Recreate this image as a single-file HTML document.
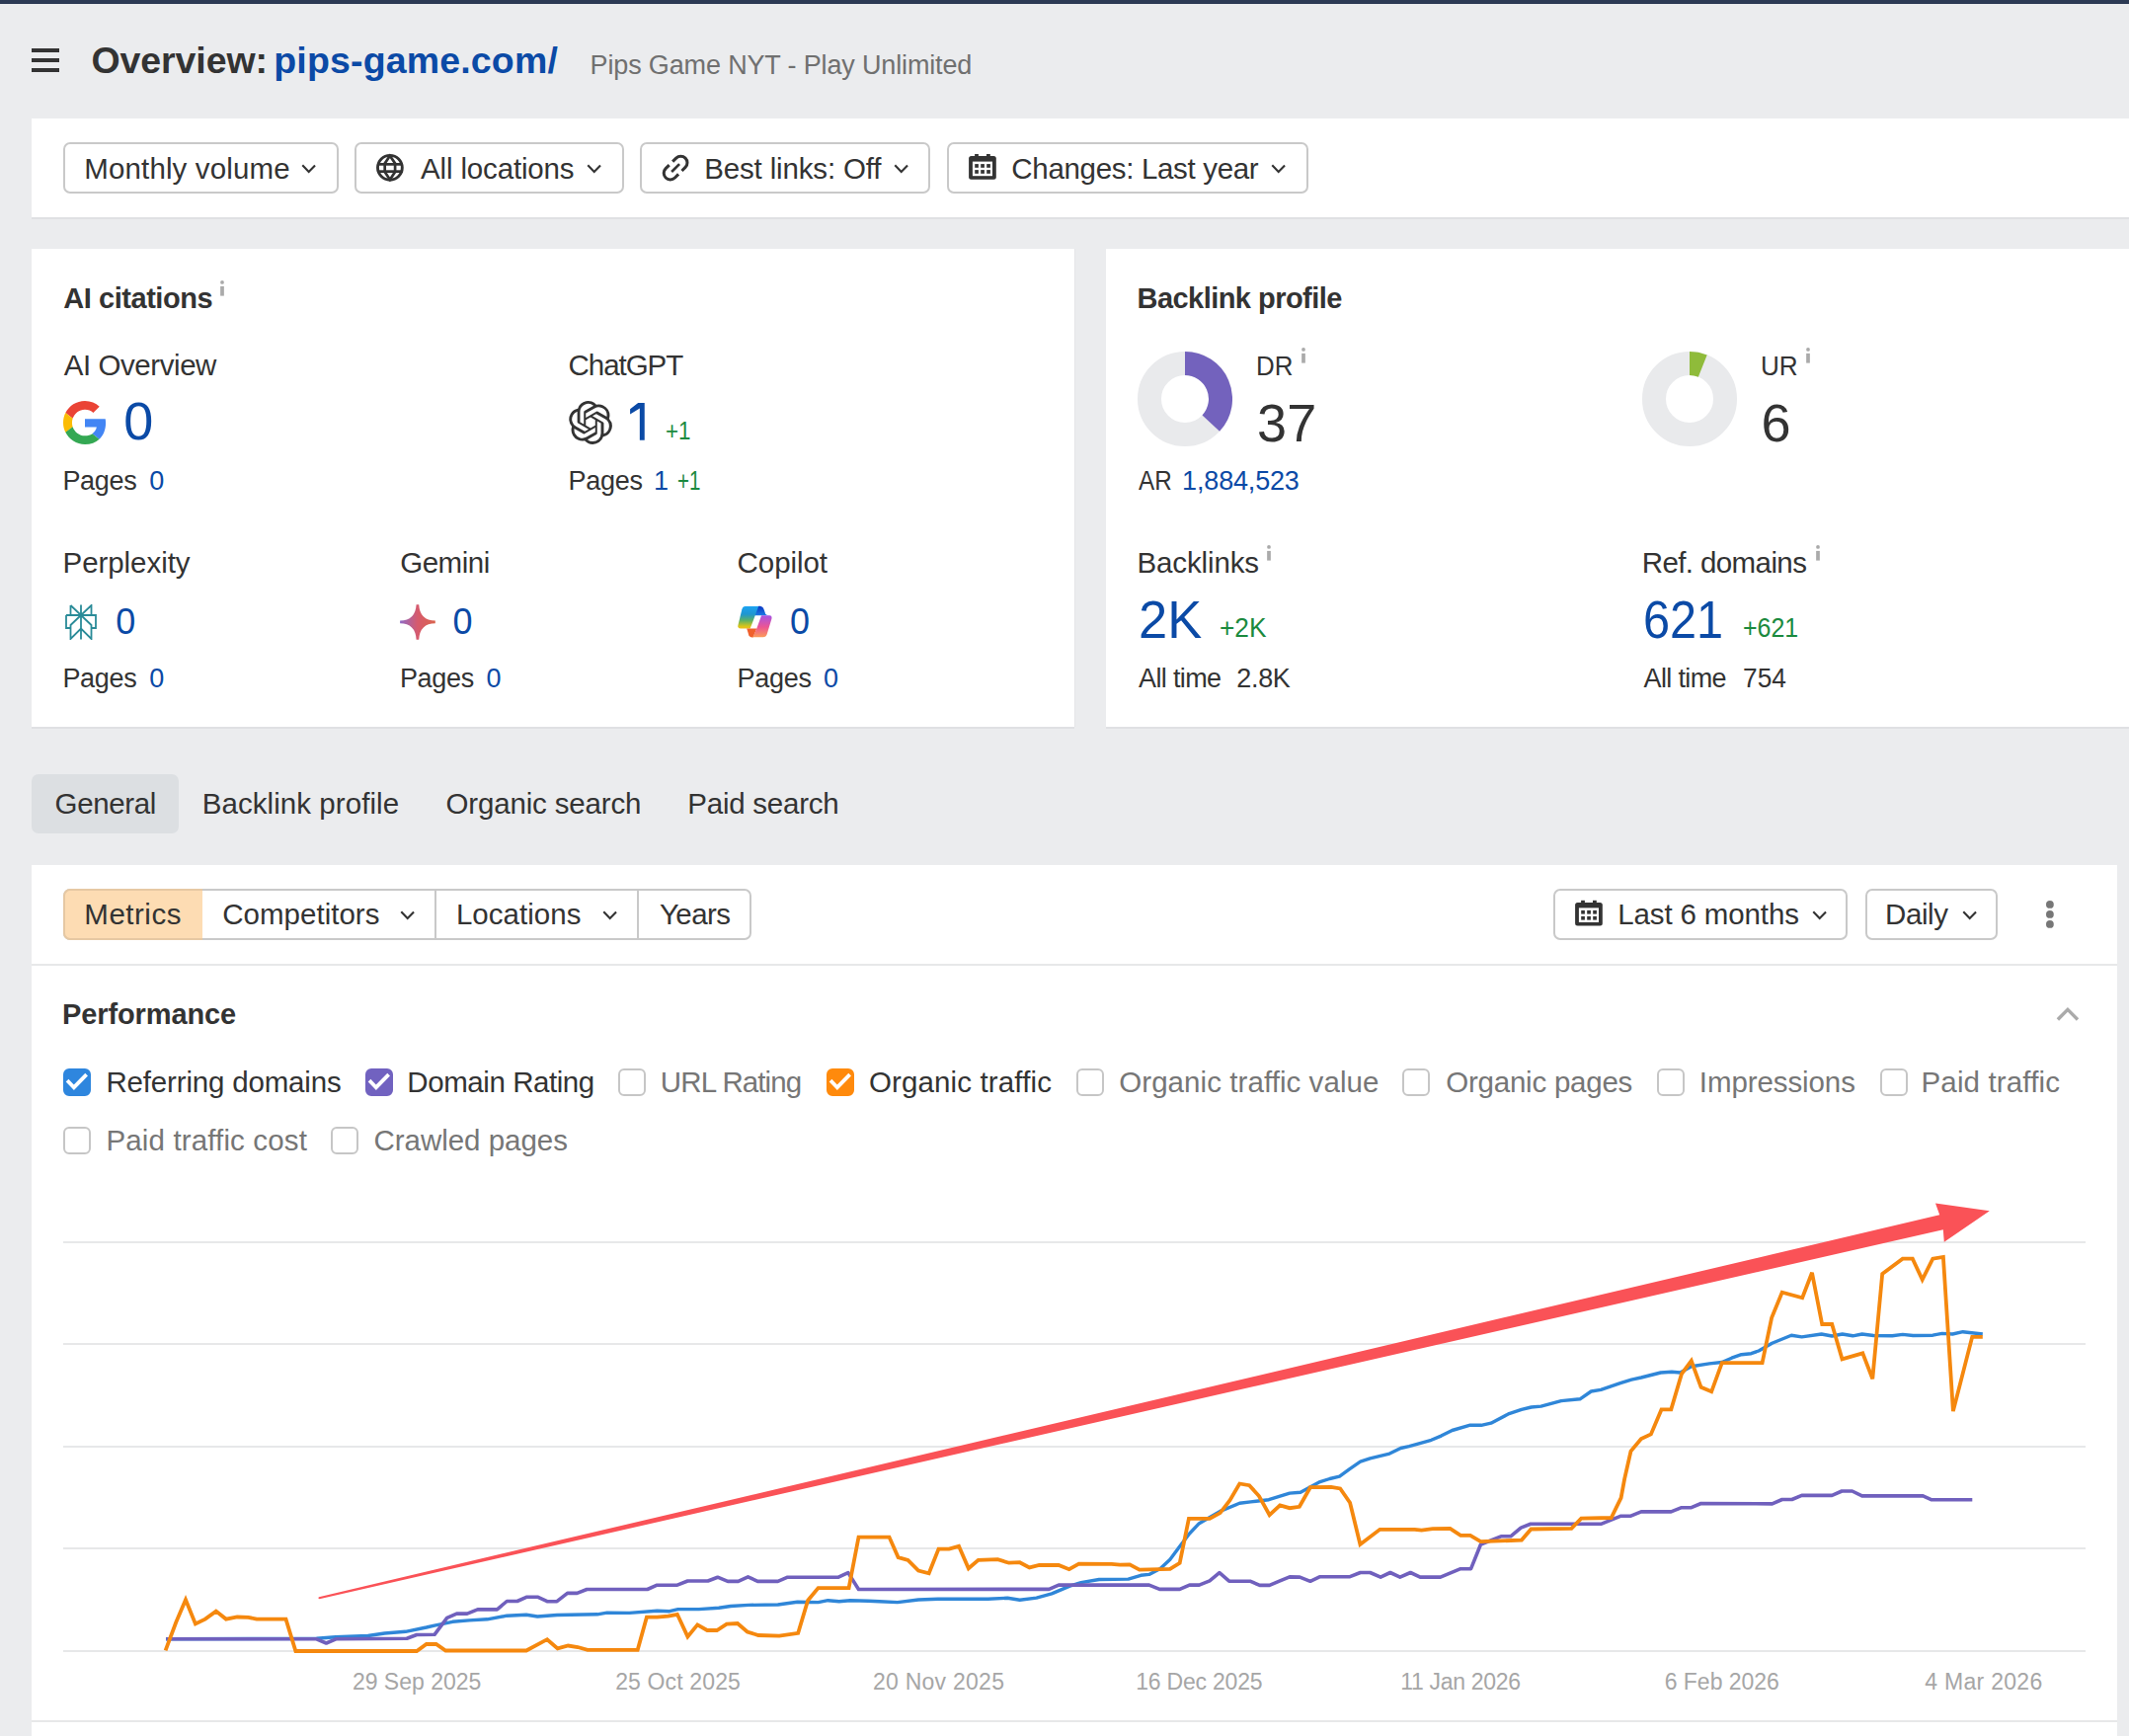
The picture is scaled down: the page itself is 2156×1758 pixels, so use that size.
<!DOCTYPE html>
<html><head><meta charset="utf-8"><title>Overview: pips-game.com/</title>
<style>
html,body{margin:0;padding:0;overflow:hidden}
body{width:2156px;height:1758px;overflow:hidden;background:#ebecee;position:relative;font-family:"Liberation Sans",sans-serif;color:#333}
.a{position:absolute}
.t{position:absolute;line-height:1;white-space:nowrap}
.card{position:absolute;background:#fff;box-shadow:0 2px 0 #dfe0e3,1px 0 0 #e4e5e7}
.btn{position:absolute;box-sizing:border-box;border:2px solid #c9c9c9;border-radius:7px;background:#fff}
.cb{position:absolute;box-sizing:border-box;width:28px;height:28px;border:2px solid #c6c6c6;border-radius:6px;background:#fff}
.hl{position:absolute;height:2px;background:#e7e8e9}
</style></head><body>
<div class="a" style="left:0;top:0;width:2156px;height:4px;background:#2c3a54"></div>
<div class="a" style="left:32px;top:49px;width:28px;height:4px;background:#333"></div>
<div class="a" style="left:32px;top:59px;width:28px;height:4px;background:#333"></div>
<div class="a" style="left:32px;top:69px;width:28px;height:4px;background:#333"></div>

<div class="card" style="left:32px;top:120px;width:2124px;height:100px"></div>
<div class="btn" style="left:64px;top:144px;width:279px;height:52px"></div>
<div class="btn" style="left:359px;top:144px;width:273px;height:52px"></div>
<div class="btn" style="left:648px;top:144px;width:294px;height:52px"></div>
<div class="btn" style="left:959px;top:144px;width:366px;height:52px"></div>
<svg class="a" style="left:304.3px;top:164.9px" width="18" height="13" viewBox="-3 -3 18 13"><polyline points="0,0 5.7,5.9 11.3,0.2" fill="none" stroke="#333333" stroke-width="2.1" stroke-linecap="square" stroke-linejoin="miter"/></svg><svg class="a" style="left:593.1px;top:164.9px" width="18" height="13" viewBox="-3 -3 18 13"><polyline points="0,0 5.7,5.9 11.3,0.2" fill="none" stroke="#333333" stroke-width="2.1" stroke-linecap="square" stroke-linejoin="miter"/></svg><svg class="a" style="left:904.1px;top:164.9px" width="18" height="13" viewBox="-3 -3 18 13"><polyline points="0,0 5.7,5.9 11.3,0.2" fill="none" stroke="#333333" stroke-width="2.1" stroke-linecap="square" stroke-linejoin="miter"/></svg><svg class="a" style="left:1285.7px;top:164.9px" width="18" height="13" viewBox="-3 -3 18 13"><polyline points="0,0 5.7,5.9 11.3,0.2" fill="none" stroke="#333333" stroke-width="2.1" stroke-linecap="square" stroke-linejoin="miter"/></svg>
<svg class="a" style="left:0;top:0;overflow:visible" width="1" height="1"><g fill="none" stroke="#333"><circle cx="394.9" cy="169.8" r="12.4" stroke-width="2.9"/><path d="M394.9,157.8 L389.7,165.5 L389.7,174 L394.9,181.9 L400.1,174 L400.1,165.5 Z" stroke-width="2.7" stroke-linejoin="miter"/></g><rect x="382" y="165" width="26" height="2.7" fill="#333"/><rect x="382" y="172.3" width="26" height="2.7" fill="#333"/></svg>
<svg class="a" style="left:0;top:0;overflow:visible" width="1" height="1"><g transform="translate(684.1,170.05) rotate(-45) scale(1.1)" fill="none" stroke="#333" stroke-linecap="butt"><path d="M2.2,-6 L6.8,-6 A6,6 0 0 1 6.8,6 L2.2,6" stroke-width="2.75"/><path d="M-2.2,-6 L-6.8,-6 A6,6 0 0 0 -6.8,6 L-2.2,6" stroke-width="2.75"/><path d="M-5.1,0 L5.1,0" stroke-width="2.4"/></g></svg>
<svg class="a" style="left:0;top:0;overflow:visible" width="1" height="1"><g fill="#333"><rect x="981.1" y="158.1" width="27.7" height="23.7" rx="2.5"/><rect x="987.1" y="156.0" width="3.8" height="3"/><rect x="999.0" y="156.0" width="3.8" height="3"/></g><rect x="984.9" y="163.6" width="20.1" height="14.6" fill="#fff"/><g fill="#333"><rect x="987.2" y="166.1" width="3.7" height="3.7"/><rect x="993.2" y="166.1" width="3.7" height="3.7"/><rect x="999.2" y="166.1" width="3.7" height="3.7"/><rect x="987.2" y="172.1" width="3.7" height="3.7"/><rect x="993.2" y="172.1" width="3.7" height="3.7"/><rect x="999.2" y="172.1" width="3.7" height="3.7"/></g></svg>

<div class="card" style="left:32px;top:252px;width:1056px;height:484px"></div>
<div class="card" style="left:1120px;top:252px;width:1036px;height:484px"></div>

<svg class="a" style="left:221.95px;top:283.2px" width="6" height="18" viewBox="221.95 283.2 6 18"><circle cx="224.95" cy="286.09999999999997" r="1.9" fill="#aaa"/><rect x="223.1" y="290.09999999999997" width="3.7" height="9.7" fill="#aaa"/></svg><svg class="a" style="left:1317.2px;top:350.9px" width="6" height="18" viewBox="1317.2 350.9 6 18"><circle cx="1320.2" cy="353.79999999999995" r="1.9" fill="#aaa"/><rect x="1318.3500000000001" y="357.79999999999995" width="3.7" height="9.7" fill="#aaa"/></svg><svg class="a" style="left:1828px;top:351.29999999999995px" width="6" height="18" viewBox="1828 351.29999999999995 6 18"><circle cx="1831" cy="354.19999999999993" r="1.9" fill="#aaa"/><rect x="1829.15" y="358.19999999999993" width="3.7" height="9.7" fill="#aaa"/></svg><svg class="a" style="left:1282px;top:551.3px" width="6" height="18" viewBox="1282 551.3 6 18"><circle cx="1285" cy="554.1999999999999" r="1.9" fill="#aaa"/><rect x="1283.15" y="558.1999999999999" width="3.7" height="9.7" fill="#aaa"/></svg><svg class="a" style="left:1837.9px;top:551.1999999999999px" width="6" height="18" viewBox="1837.9 551.1999999999999 6 18"><circle cx="1840.9" cy="554.0999999999999" r="1.9" fill="#aaa"/><rect x="1839.0500000000002" y="558.0999999999999" width="3.7" height="9.7" fill="#aaa"/></svg>
<svg class="a" style="left:0;top:0;overflow:visible" width="1" height="1"><path d="M646.2,408.1 L652.74,408.1 L652.74,445.85 L647.85,445.85 L647.85,413.6 L638.1,419.4 L638.1,414.2 Z" fill="#0b4aa6"/></svg>
<!-- Google G -->
<svg class="a" style="left:64px;top:406px" width="44" height="44" viewBox="0 0 48 48"><path fill="#EA4335" d="M24 9.5c3.54 0 6.71 1.22 9.21 3.6l6.85-6.85C35.9 2.38 30.47 0 24 0 14.62 0 6.51 5.38 2.56 13.22l7.98 6.19C12.43 13.72 17.74 9.5 24 9.5z"/><path fill="#4285F4" d="M46.98 24.55c0-1.57-.15-3.09-.38-4.55H24v9.02h12.94c-.58 2.96-2.26 5.48-4.78 7.18l7.73 6c4.51-4.18 7.09-10.36 7.09-17.65z"/><path fill="#FBBC05" d="M10.53 28.59c-.48-1.45-.76-2.99-.76-4.59s.27-3.14.76-4.59l-7.98-6.19C.92 16.46 0 20.12 0 24c0 3.88.92 7.54 2.56 10.78l7.97-6.19z"/><path fill="#34A853" d="M24 48c6.48 0 11.93-2.13 15.89-5.81l-7.73-6c-2.15 1.450-4.92 2.3-8.16 2.3-6.26 0-11.57-4.22-13.47-9.91l-7.98 6.19C6.51 42.62 14.62 48 24 48z"/></svg>
<!-- ChatGPT -->
<svg class="a" style="left:576px;top:406px" width="44" height="44" viewBox="0 0 24 24"><path fill="#333" d="M22.28 9.82a5.98 5.98 0 0 0-.52-4.91 6.05 6.05 0 0 0-6.51-2.9A6.07 6.07 0 0 0 4.98 4.18a5.98 5.98 0 0 0-4 2.9 6.05 6.05 0 0 0 .74 7.1 5.98 5.98 0 0 0 .51 4.91 6.05 6.05 0 0 0 6.52 2.9A5.98 5.98 0 0 0 13.26 24a6.06 6.06 0 0 0 5.77-4.21 5.99 5.99 0 0 0 4-2.9 6.06 6.06 0 0 0-.75-7.07zm-9.02 12.61a4.48 4.48 0 0 1-2.88-1.04l.14-.08 4.78-2.76a.8.8 0 0 0 .39-.68v-6.74l2.02 1.17a.07.07 0 0 1 .04.05v5.58a4.5 4.5 0 0 1-4.49 4.5zm-9.66-4.13a4.47 4.470 0 0 1-.53-3.01l.14.09 4.78 2.76a.77.77 0 0 0 .78 0l5.84-3.37v2.33a.08.08 0 0 1-.03.06L9.74 19.95a4.5 4.5 0 0 1-6.14-1.65zM2.34 7.9a4.49 4.49 0 0 1 2.37-1.97v5.68a.77.77 0 0 0 .39.68l5.81 3.35-2.02 1.17a.08.08 0 0 1-.07 0l-4.83-2.79A4.5 4.5 0 0 1 2.34 7.87zm16.6 3.86L13.1 8.36l2.02-1.16a.08.08 0 0 1 .07 0l4.83 2.79a4.49 4.49 0 0 1-.68 8.1v-5.68a.79.79 0 0 0-.41-.68zm2.01-3.02l-.14-.09-4.77-2.78a.78.78 0 0 0-.79 0L9.41 9.23V6.9a.07.07 0 0 1 .03-.06l4.83-2.79a4.5 4.5 0 0 1 6.68 4.66zM8.31 12.86L6.29 11.7a.08.08 0 0 1-.04-.06V6.08a4.5 4.5 0 0 1 7.37-3.45l-.14.08-4.78 2.76a.8.8 0 0 0-.39.68zm1.1-2.37l2.6-1.5 2.6 1.5v3l-2.6 1.5-2.6-1.5z"/></svg>
<!-- Perplexity -->
<svg class="a" style="left:66px;top:612px" width="32" height="36" viewBox="0 0 32 36" fill="none" stroke="#2a8b98" stroke-width="1.8" stroke-linejoin="miter"><path d="M16 0.5V35.5 M5.5 1 L16 11 L26.5 1 V11 M5.5 1 V11 M1 11 H31 V24 H26.5 M1 11 V24 H5.5 M16 11 L5.5 21 V35 L16 24.5 L26.5 35 V21 L16 11"/></svg>
<!-- Gemini -->
<svg class="a" style="left:0;top:0;overflow:visible" width="1" height="1"><defs><linearGradient id="gm" gradientUnits="userSpaceOnUse" x1="405" y1="0" x2="441" y2="0"><stop offset="0" stop-color="#8f6ac6"/><stop offset="0.5" stop-color="#d75a6c"/><stop offset="1" stop-color="#d9644e"/></linearGradient>
<linearGradient id="cp1" gradientUnits="userSpaceOnUse" x1="0" y1="614" x2="0" y2="637"><stop offset="0" stop-color="#1ca3f3"/><stop offset="0.35" stop-color="#1f96cf"/><stop offset="0.62" stop-color="#5bb166"/><stop offset="0.88" stop-color="#d9c518"/><stop offset="1" stop-color="#f3be22"/></linearGradient>
<linearGradient id="cp2" gradientUnits="userSpaceOnUse" x1="0" y1="623" x2="0" y2="645"><stop offset="0" stop-color="#a653e6"/><stop offset="0.55" stop-color="#ec5592"/><stop offset="1" stop-color="#fb9a5a"/></linearGradient>
<linearGradient id="cp3" gradientUnits="userSpaceOnUse" x1="0" y1="614" x2="0" y2="623"><stop offset="0" stop-color="#0b38c4"/><stop offset="1" stop-color="#1b78e2"/></linearGradient></defs>
<path fill="url(#gm)" d="M421.6,612.3 L424.2,612.3 Q425.2,628.6 440.8,628.6 L440.8,631.2 Q425.2,631.2 424.2,647.7 L421.6,647.7 Q420.6,631.2 405.1,631.2 L405.1,628.6 Q420.6,628.6 421.6,612.3 Z"/>
<path fill="url(#cp3)" d="M766.5,614.1 L769.5,613.8 Q773,614 774.2,618.8 L775.2,621.8 Q775.8,623.2 779,623.2 L764.3,623.2 Z"/>
<path fill="url(#cp1)" d="M754.7,614.1 L768.2,614.1 L759.7,636.6 L749.8,636.6 Q746.8,636.4 747.4,633.2 L751.3,617.3 Q752.3,614.1 754.7,614.1 Z"/>
<path fill="#f0602c" d="M756.2,636.6 L766.3,636.6 L762.6,645.4 Q759.6,645.9 758.3,643.2 Z"/>
<path fill="url(#cp2)" d="M771.1,623.2 L779.3,623.2 Q782.2,623.5 781.4,626.8 L776.7,642.3 Q775.8,645.2 772.8,645.2 L762.3,645.2 L766.3,636.6 Z"/>
</svg>
<!-- donuts -->
<svg class="a" style="left:1152px;top:356px" width="96" height="96" viewBox="-48 -48 96 96"><circle r="36" fill="none" stroke="#e9eaec" stroke-width="24"/><path d="M0,-48 A48,48 0 0 1 35.04,32.81 L17.52,16.4 A24,24 0 0 0 0,-24z" fill="#7362bd"/></svg>
<svg class="a" style="left:1663px;top:356px" width="96" height="96" viewBox="-48 -48 96 96"><circle r="36" fill="none" stroke="#e9eaec" stroke-width="24"/><path d="M0,-48 A48,48 0 0 1 17.68,-44.62 L8.84,-22.31 A24,24 0 0 0 0,-24z" fill="#8fbb3a"/></svg>

<!-- tabs -->
<div class="a" style="left:32px;top:784px;width:149px;height:60px;background:#dcdfe2;border-radius:7px"></div>

<!-- chart card -->
<div class="a" style="left:32px;top:876px;width:2112px;height:882px;background:#fff"></div>
<div class="a" style="left:64px;top:900px;width:697px;height:52px;box-sizing:border-box;border:2px solid #c9c9c9;border-radius:7px;background:#fff"></div>
<div class="a" style="left:64px;top:900px;width:141px;height:52px;box-sizing:border-box;background:#fddcb3;border:2px solid #e6c8a3;border-right:none;border-radius:7px 0 0 7px"></div>
<div class="a" style="left:440px;top:900px;width:2px;height:52px;background:#c9c9c9"></div>
<div class="a" style="left:645px;top:900px;width:2px;height:52px;background:#c9c9c9"></div>
<svg class="a" style="left:403.6px;top:920.5px" width="18" height="13" viewBox="-3 -3 18 13"><polyline points="0,0 5.7,5.9 11.3,0.2" fill="none" stroke="#333333" stroke-width="2.1" stroke-linecap="square" stroke-linejoin="miter"/></svg><svg class="a" style="left:609.1px;top:920.5px" width="18" height="13" viewBox="-3 -3 18 13"><polyline points="0,0 5.7,5.9 11.3,0.2" fill="none" stroke="#333333" stroke-width="2.1" stroke-linecap="square" stroke-linejoin="miter"/></svg>
<div class="btn" style="left:1573px;top:900px;width:298px;height:52px"></div>
<div class="btn" style="left:1889px;top:900px;width:134px;height:52px"></div>
<svg class="a" style="left:0;top:0;overflow:visible" width="1" height="1"><g fill="#333"><rect x="1595.1" y="913.9" width="27.7" height="23.7" rx="2.5"/><rect x="1601.1" y="911.8" width="3.8" height="3"/><rect x="1613.0" y="911.8" width="3.8" height="3"/></g><rect x="1598.9" y="919.4" width="20.1" height="14.6" fill="#fff"/><g fill="#333"><rect x="1601.2" y="921.9" width="3.7" height="3.7"/><rect x="1607.2" y="921.9" width="3.7" height="3.7"/><rect x="1613.2" y="921.9" width="3.7" height="3.7"/><rect x="1601.2" y="927.9" width="3.7" height="3.7"/><rect x="1607.2" y="927.9" width="3.7" height="3.7"/><rect x="1613.2" y="927.9" width="3.7" height="3.7"/></g></svg>
<svg class="a" style="left:1834.4px;top:920.5px" width="18" height="13" viewBox="-3 -3 18 13"><polyline points="0,0 5.7,5.9 11.3,0.2" fill="none" stroke="#333333" stroke-width="2.1" stroke-linecap="square" stroke-linejoin="miter"/></svg><svg class="a" style="left:1985.6px;top:920.5px" width="18" height="13" viewBox="-3 -3 18 13"><polyline points="0,0 5.7,5.9 11.3,0.2" fill="none" stroke="#333333" stroke-width="2.1" stroke-linecap="square" stroke-linejoin="miter"/></svg>
<svg class="a" style="left:2068px;top:910px" width="16" height="34" viewBox="0 0 16 34"><circle cx="7.9" cy="5.9" r="3.9" fill="#777"/><circle cx="7.9" cy="15.9" r="3.9" fill="#777"/><circle cx="7.9" cy="25.95" r="3.9" fill="#777"/></svg>
<div class="hl" style="left:32px;top:976px;width:2112px"></div>
<svg class="a" style="left:0;top:0;overflow:visible" width="1" height="1"><polyline points="2085.1,1031.3 2093.95,1022.4 2102.8,1031.3" fill="none" stroke="#aaa" stroke-width="3.4" stroke-linecap="square"/></svg>
<div class="cb" style="left:64px;top:1082px;background:#2e86de;border-color:#2e86de"><svg width="28" height="28" viewBox="0 0 28 28" style="position:absolute;left:-2px;top:-2px"><polyline points="5.4,13.5 10.9,19.2 22.3,7.5" fill="none" stroke="#fff" stroke-width="3.8" stroke-linecap="square"/></svg></div><div class="cb" style="left:370px;top:1082px;background:#7162c0;border-color:#7162c0"><svg width="28" height="28" viewBox="0 0 28 28" style="position:absolute;left:-2px;top:-2px"><polyline points="5.4,13.5 10.9,19.2 22.3,7.5" fill="none" stroke="#fff" stroke-width="3.8" stroke-linecap="square"/></svg></div><div class="cb" style="left:626px;top:1082px"></div><div class="cb" style="left:837px;top:1082px;background:#ff8a0c;border-color:#ff8a0c"><svg width="28" height="28" viewBox="0 0 28 28" style="position:absolute;left:-2px;top:-2px"><polyline points="5.4,13.5 10.9,19.2 22.3,7.5" fill="none" stroke="#fff" stroke-width="3.8" stroke-linecap="square"/></svg></div><div class="cb" style="left:1090px;top:1082px"></div><div class="cb" style="left:1420px;top:1082px"></div><div class="cb" style="left:1678px;top:1082px"></div><div class="cb" style="left:1904px;top:1082px"></div>
<div class="cb" style="left:64px;top:1141px"></div><div class="cb" style="left:335px;top:1141px"></div>

<!-- grid -->
<div class="hl" style="left:64px;top:1257px;width:2048px"></div>
<div class="hl" style="left:64px;top:1360px;width:2048px"></div>
<div class="hl" style="left:64px;top:1464px;width:2048px"></div>
<div class="hl" style="left:64px;top:1567px;width:2048px"></div>
<div class="hl" style="left:64px;top:1671px;width:2048px"></div>
<div class="hl" style="left:32px;top:1742px;width:2112px"></div>

<svg class="a" style="left:0;top:0" width="2156" height="1758" viewBox="0 0 2156 1758">
<polyline points="168.0,1659.8 320.5,1659.2 340.0,1657.8 372.6,1656.5 389.5,1654.0 410.7,1652.3 431.8,1648.0 440.0,1646.1 458.3,1642.3 475.2,1640.9 493.5,1639.8 513.3,1636.2 533.0,1635.3 544.3,1637.0 564.0,1635.5 604.9,1634.8 614.7,1633.1 637.3,1633.4 665.4,1631.3 678.1,1631.7 686.6,1629.6 707.7,1629.6 728.0,1628.3 739.9,1626.5 758.2,1625.4 787.8,1625.0 807.5,1622.2 828.6,1622.6 838.5,1620.7 849.8,1621.7 861.0,1620.7 879.4,1621.2 890.6,1621.7 908.9,1622.6 930.1,1620.0 949.8,1619.3 1000.5,1619.3 1020.3,1618.3 1032.7,1620.2 1049.6,1618.1 1065.1,1613.9 1083.4,1606.1 1094.7,1602.6 1113.0,1599.5 1142.6,1599.1 1155.3,1595.3 1163.7,1594.4 1175.0,1588.5 1184.9,1579.3 1194.7,1566.0 1204.6,1553.0 1214.4,1542.7 1224.3,1537.1 1235.6,1530.4 1255.3,1522.3 1266.6,1520.9 1284.9,1518.7 1306.0,1512.1 1317.0,1511.2 1336.8,1500.6 1346.6,1497.5 1356.5,1495.2 1366.4,1487.9 1377.6,1480.2 1387.5,1476.9 1407.2,1472.1 1418.5,1466.5 1427.0,1464.7 1449.5,1458.3 1459.4,1454.1 1470.6,1448.5 1488.9,1443.1 1500.0,1443.3 1509.9,1441.2 1528.2,1431.6 1540.9,1427.4 1550.7,1425.0 1560.6,1424.1 1581.0,1418.6 1600.0,1416.8 1611.3,1409.0 1621.2,1407.4 1640.9,1400.6 1652.2,1397.1 1662.0,1395.0 1681.8,1390.0 1693.0,1389.3 1701.5,1390.0 1712.8,1383.7 1731.1,1380.9 1743.8,1379.5 1753.6,1375.2 1763.5,1371.7 1773.4,1370.7 1781.0,1368.0 1794.5,1360.2 1814.1,1352.2 1824.6,1353.9 1844.6,1351.0 1855.2,1353.0 1865.7,1351.0 1876.3,1352.8 1885.7,1351.0 1897.4,1352.5 1916.2,1352.8 1926.8,1351.4 1937.3,1352.5 1957.3,1352.2 1966.7,1350.4 1977.3,1351.0 1987.8,1348.7 2007.8,1351.0" fill="none" stroke="#2f86d8" stroke-width="3.4" stroke-linejoin="round"/>
<polyline points="168.3,1659.8 320.5,1659.8 330.4,1664.0 340.2,1659.8 412.0,1659.3 422.0,1655.5 440.0,1655.3 452.7,1638.4 462.5,1634.1 473.1,1634.1 483.7,1629.9 503.4,1629.9 513.3,1621.5 523.8,1621.5 533.7,1617.2 544.3,1617.2 554.1,1621.7 564.0,1621.7 574.6,1613.4 584.4,1613.4 594.3,1609.5 655.6,1609.5 665.4,1605.2 685.9,1605.2 696.4,1601.0 716.9,1601.0 726.7,1597.2 737.0,1601.4 747.6,1601.4 757.5,1596.8 767.3,1601.4 787.8,1601.4 797.6,1597.2 849.1,1597.2 858.9,1592.6 869.5,1609.5 1062.3,1609.4 1072.1,1605.1 1163.7,1605.1 1174.3,1609.4 1194.7,1609.4 1204.6,1605.1 1214.4,1605.1 1225.0,1600.9 1234.9,1592.7 1244.7,1601.2 1265.9,1601.2 1275.7,1605.4 1285.6,1605.4 1296.2,1600.9 1306.0,1596.9 1316.3,1597.1 1326.9,1601.3 1336.8,1596.7 1367.1,1596.7 1377.6,1592.5 1387.5,1592.5 1398.1,1597.1 1407.9,1592.5 1417.8,1597.1 1428.4,1592.5 1438.2,1597.1 1458.7,1597.1 1479.1,1588.7 1489.6,1588.7 1499.5,1564.0 1520.0,1555.8 1529.8,1555.8 1540.2,1547.1 1550.0,1543.3 1621.2,1543.3 1641.6,1535.2 1651.5,1535.2 1662.0,1530.9 1692.3,1530.9 1702.9,1526.7 1712.8,1526.7 1722.6,1522.5 1794.7,1522.9 1804.7,1518.5 1814.7,1518.5 1824.6,1514.4 1855.2,1514.4 1865.2,1510.0 1875.7,1510.0 1885.7,1514.9 1947.4,1514.9 1956.2,1518.8 1997.3,1518.8" fill="none" stroke="#7060bd" stroke-width="3.6" stroke-linejoin="round"/>
<polyline points="167.6,1671.3 178.2,1643.0 188.0,1620.0 197.9,1644.5 207.8,1639.6 218.8,1631.6 228.9,1639.6 240.2,1637.5 251.4,1637.8 259.9,1639.6 289.5,1639.6 299.4,1672.0 422.0,1672.0 431.8,1665.0 441.7,1665.0 451.3,1671.5 533.0,1671.5 554.1,1660.2 564.7,1669.4 575.3,1666.5 585.1,1668.0 595.0,1670.8 645.7,1670.8 654.9,1637.7 665.4,1637.7 676.7,1636.7 685.9,1634.8 696.4,1657.4 706.3,1645.4 716.2,1651.0 726.0,1651.0 735.9,1644.7 746.9,1644.0 756.8,1652.5 768.0,1656.0 789.2,1656.7 808.2,1653.9 818.1,1620.7 828.6,1608.1 859.6,1608.1 869.5,1556.6 900.5,1556.6 909.6,1577.1 919.5,1579.9 930.1,1590.5 940.7,1593.3 950.5,1568.6 961.1,1568.6 971.0,1565.8 980.8,1588.3 990.7,1579.9 1010.4,1579.2 1021.7,1582.7 1032.7,1582.2 1042.5,1587.4 1052.4,1585.0 1072.1,1585.0 1082.7,1589.2 1092.6,1583.6 1125.7,1583.8 1134.1,1584.6 1144.0,1584.3 1153.9,1589.6 1184.9,1588.8 1194.7,1582.9 1203.9,1537.8 1225.0,1537.8 1235.6,1532.1 1245.4,1519.5 1255.3,1502.5 1265.2,1504.2 1275.0,1515.0 1285.6,1534.2 1296.2,1524.4 1306.0,1527.2 1315.9,1525.8 1326.9,1506.2 1348.0,1505.9 1357.2,1507.4 1367.1,1521.7 1377.4,1564.0 1397.4,1548.8 1432.6,1548.8 1439.6,1549.6 1450.9,1548.2 1468.5,1547.8 1479.1,1554.8 1488.9,1554.8 1499.5,1561.2 1540.9,1559.6 1550.5,1548.5 1591.4,1547.8 1601.3,1537.6 1631.7,1537.0 1641.6,1516.8 1645.1,1497.8 1651.5,1469.6 1662.0,1457.0 1671.9,1452.4 1682.5,1427.4 1692.3,1427.4 1702.9,1391.4 1712.8,1378.0 1722.6,1404.8 1733.2,1409.3 1743.8,1380.2 1784.6,1380.2 1794.1,1334.6 1804.7,1308.7 1825.2,1314.3 1835.0,1288.8 1845.2,1341.0 1855.2,1341.0 1865.5,1376.3 1886.3,1370.4 1896.3,1396.2 1906.2,1289.9 1926.8,1274.7 1936.8,1274.7 1946.7,1295.8 1957.3,1274.7 1967.9,1272.9 1977.9,1429.1 1997.2,1353.9 2007.8,1353.9" fill="none" stroke="#f5880e" stroke-width="3.8" stroke-linejoin="miter" stroke-miterlimit="3"/>
<path d="M323,1617.2 L1964.2,1230.3 L1960,1218.4 L2014.8,1226.2 L1968.8,1257.7 L1967.8,1245.3 L323.5,1619.2 Q321.5,1618.6 323,1617.2z" fill="#fa5257"/>
</svg>
<div class="t" style="left:92.43px;top:42.85px;font-size:37.5px;color:#333333;letter-spacing:-0.08px;font-weight:700">Overview:</div><div class="t" style="left:277.26px;top:42.85px;font-size:37.5px;color:#0b4aa6;letter-spacing:0.16px;font-weight:700">pips-game.com/</div><div class="t" style="left:597.59px;top:52.64px;font-size:27px;color:#707070;letter-spacing:-0.15px">Pips Game NYT - Play Unlimited</div><div class="t" style="left:85.3px;top:155.52px;font-size:29.5px;color:#333;letter-spacing:0.13px">Monthly volume</div><div class="t" style="left:426px;top:155.52px;font-size:29.5px;color:#333;letter-spacing:-0.15px">All locations</div><div class="t" style="left:713.2px;top:155.52px;font-size:29.5px;color:#333;letter-spacing:-0.15px">Best links: Off</div><div class="t" style="left:1024.32px;top:155.52px;font-size:29.5px;color:#333;letter-spacing:-0.32px">Changes: Last year</div><div class="t" style="left:64.35px;top:287.55px;font-size:29px;color:#333;letter-spacing:-0.46px;font-weight:700">AI citations</div><div class="t" style="left:64.8px;top:355.22px;font-size:29.5px;color:#333;letter-spacing:-0.44px">AI Overview</div><div class="t" style="left:125.31px;top:399.48px;font-size:54px;color:#0b4aa6">0</div><div class="t" style="left:63.39px;top:474.14px;font-size:27px;color:#333;letter-spacing:-0.28px">Pages</div><div class="t" style="left:151.16px;top:474.14px;font-size:27px;color:#0b4aa6">0</div><div class="t" style="left:575.62px;top:355.02px;font-size:29.5px;color:#333;letter-spacing:-1.06px">ChatGPT</div><div class="t" style="left:673.95px;top:423.36px;font-size:26.5px;color:#1b8a3e;transform:scaleX(0.846);transform-origin:0 0">+1</div><div class="t" style="left:575.49px;top:473.84px;font-size:27px;color:#333;letter-spacing:-0.28px">Pages</div><div class="t" style="left:662.11px;top:473.84px;font-size:27px;color:#0b4aa6">1</div><div class="t" style="left:685.84px;top:473.84px;font-size:27px;color:#1b8a3e;transform:scaleX(0.760);transform-origin:0 0">+1</div><div class="t" style="left:63.5px;top:555.22px;font-size:29.5px;color:#333;letter-spacing:-0.05px">Perplexity</div><div class="t" style="left:117.17px;top:611.82px;font-size:36px;color:#0b4aa6">0</div><div class="t" style="left:63.39px;top:673.84px;font-size:27px;color:#333;letter-spacing:-0.28px">Pages</div><div class="t" style="left:151.16px;top:673.84px;font-size:27px;color:#0b4aa6">0</div><div class="t" style="left:405.22px;top:555.22px;font-size:29.5px;color:#333;letter-spacing:-0.48px">Gemini</div><div class="t" style="left:458.38px;top:611.82px;font-size:36px;color:#0b4aa6">0</div><div class="t" style="left:404.89px;top:673.84px;font-size:27px;color:#333;letter-spacing:-0.28px">Pages</div><div class="t" style="left:492.46px;top:673.84px;font-size:27px;color:#0b4aa6">0</div><div class="t" style="left:746.62px;top:555.22px;font-size:29.5px;color:#333;letter-spacing:-0.09px">Copilot</div><div class="t" style="left:799.88px;top:611.82px;font-size:36px;color:#0b4aa6">0</div><div class="t" style="left:746.49px;top:673.84px;font-size:27px;color:#333;letter-spacing:-0.28px">Pages</div><div class="t" style="left:833.96px;top:673.84px;font-size:27px;color:#0b4aa6">0</div><div class="t" style="left:1151.49px;top:287.55px;font-size:29px;color:#333;letter-spacing:-0.54px;font-weight:700">Backlink profile</div><div class="t" style="left:1271.98px;top:355.67px;font-size:28.5px;color:#333;transform:scaleX(0.909);transform-origin:0 0">DR</div><div class="t" style="left:1273.01px;top:400.58px;font-size:54px;color:#333;letter-spacing:0.11px">37</div><div class="t" style="left:1152.7px;top:473.84px;font-size:27px;color:#333;transform:scaleX(0.897);transform-origin:0 0">AR</div><div class="t" style="left:1197.11px;top:473.84px;font-size:27px;color:#0b4aa6;letter-spacing:-0.17px">1,884,523</div><div class="t" style="left:1783.37px;top:355.67px;font-size:28.5px;color:#333;transform:scaleX(0.917);transform-origin:0 0">UR</div><div class="t" style="left:1783.47px;top:400.58px;font-size:54px;color:#333">6</div><div class="t" style="left:1151.4px;top:555.02px;font-size:29.5px;color:#333;letter-spacing:-0.11px">Backlinks</div><div class="t" style="left:1153.24px;top:600.08px;font-size:54px;color:#0b4aa6;transform:scaleX(0.972);transform-origin:0 0">2K</div><div class="t" style="left:1234.77px;top:622.94px;font-size:27px;color:#1b8a3e;transform:scaleX(0.974);transform-origin:0 0">+2K</div><div class="t" style="left:1153px;top:673.84px;font-size:27px;color:#333;letter-spacing:-0.63px">All time</div><div class="t" style="left:1252.33px;top:673.84px;font-size:27px;color:#333;letter-spacing:-0.36px">2.8K</div><div class="t" style="left:1662.7px;top:555.02px;font-size:29.5px;color:#333;letter-spacing:-0.6px">Ref. domains</div><div class="t" style="left:1663.72px;top:600.08px;font-size:54px;color:#0b4aa6;transform:scaleX(0.900);transform-origin:0 0">621</div><div class="t" style="left:1764.73px;top:622.94px;font-size:27px;color:#1b8a3e;transform:scaleX(0.925);transform-origin:0 0">+621</div><div class="t" style="left:1664.5px;top:673.84px;font-size:27px;color:#333;letter-spacing:-0.63px">All time</div><div class="t" style="left:1764.77px;top:673.84px;font-size:27px;color:#333;transform:scaleX(0.974);transform-origin:0 0">754</div><div class="t" style="left:55.62px;top:799.02px;font-size:29.5px;color:#333;letter-spacing:-0.39px">General</div><div class="t" style="left:204.7px;top:799.02px;font-size:29.5px;color:#333;letter-spacing:0.07px">Backlink profile</div><div class="t" style="left:451.42px;top:799.02px;font-size:29.5px;color:#333;letter-spacing:-0.15px">Organic search</div><div class="t" style="left:696.3px;top:799.02px;font-size:29.5px;color:#333;letter-spacing:-0.24px">Paid search</div><div class="t" style="left:85.3px;top:911.02px;font-size:29.5px;color:#333;letter-spacing:0.51px">Metrics</div><div class="t" style="left:225.22px;top:911.02px;font-size:29.5px;color:#333;letter-spacing:0.02px">Competitors</div><div class="t" style="left:461.9px;top:911.02px;font-size:29.5px;color:#333;letter-spacing:0.03px">Locations</div><div class="t" style="left:667.94px;top:911.02px;font-size:29.5px;color:#333;letter-spacing:-0.59px">Years</div><div class="t" style="left:1638.3px;top:911.02px;font-size:29.5px;color:#333;letter-spacing:-0.14px">Last 6 months</div><div class="t" style="left:1909px;top:911.02px;font-size:29.5px;color:#333;letter-spacing:-0.39px">Daily</div><div class="t" style="left:62.99px;top:1013.45px;font-size:29px;color:#333;letter-spacing:-0.11px;font-weight:700">Performance</div><div class="t" style="left:107.5px;top:1080.62px;font-size:29.5px;color:#333333;letter-spacing:-0.18px">Referring domains</div><div class="t" style="left:412.3px;top:1080.62px;font-size:29.5px;color:#333333;letter-spacing:-0.43px">Domain Rating</div><div class="t" style="left:668.86px;top:1080.62px;font-size:29.5px;color:#767676;letter-spacing:-0.9px">URL Rating</div><div class="t" style="left:879.92px;top:1080.62px;font-size:29.5px;color:#333333;letter-spacing:0.14px">Organic traffic</div><div class="t" style="left:1133.22px;top:1080.62px;font-size:29.5px;color:#767676;letter-spacing:0.07px">Organic traffic value</div><div class="t" style="left:1464.32px;top:1080.62px;font-size:29.5px;color:#767676;letter-spacing:-0.24px">Organic pages</div><div class="t" style="left:1720.8px;top:1080.62px;font-size:29.5px;color:#767676;letter-spacing:-0.09px">Impressions</div><div class="t" style="left:1945.5px;top:1080.62px;font-size:29.5px;color:#767676;letter-spacing:0.15px">Paid traffic</div><div class="t" style="left:107.5px;top:1139.82px;font-size:29.5px;color:#767676;letter-spacing:0.14px">Paid traffic cost</div><div class="t" style="left:378.42px;top:1139.82px;font-size:29.5px;color:#767676;letter-spacing:-0.02px">Crawled pages</div><div class="t" style="left:356.9px;top:1691.53px;font-size:23px;color:#a6a6a6">29 Sep 2025</div><div class="t" style="left:623.2px;top:1691.53px;font-size:23px;color:#a6a6a6;letter-spacing:0.14px">25 Oct 2025</div><div class="t" style="left:883.9px;top:1691.53px;font-size:23px;color:#a6a6a6;letter-spacing:0.26px">20 Nov 2025</div><div class="t" style="left:1150.3px;top:1691.53px;font-size:23px;color:#a6a6a6;letter-spacing:-0.22px">16 Dec 2025</div><div class="t" style="left:1418.3px;top:1691.53px;font-size:23px;color:#a6a6a6;letter-spacing:-0.32px">11 Jan 2026</div><div class="t" style="left:1685.7px;top:1691.53px;font-size:23px;color:#a6a6a6;letter-spacing:-0.02px">6 Feb 2026</div><div class="t" style="left:1949.2px;top:1691.53px;font-size:23px;color:#a6a6a6;letter-spacing:0.3px">4 Mar 2026</div>
</body></html>
